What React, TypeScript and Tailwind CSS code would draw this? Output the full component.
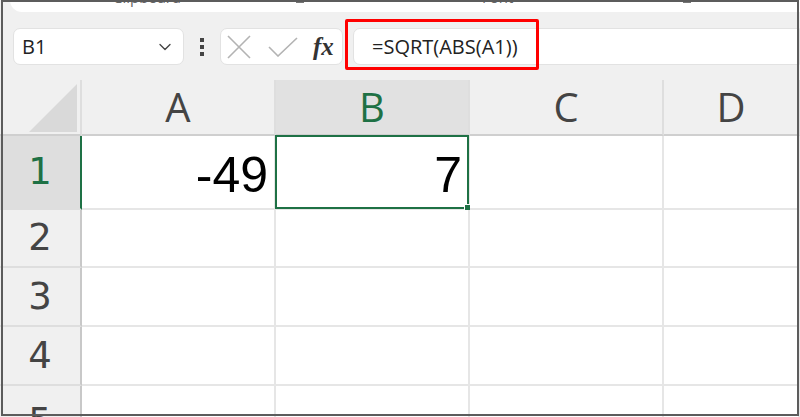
import { ChevronDown } from "lucide-react";

const cols = ["A", "B", "C", "D"];
const rowHeights = ["h-[74px]", "h-[58px]", "h-[59px]", "h-[59px]", "h-[40px]"];

const XIcon = () => (
  <svg width="24" height="24" viewBox="0 0 24 24" fill="none" stroke="#b3b3b3" strokeWidth="1.6">
    <path d="M1 1 L23 23 M23 1 L1 23" />
  </svg>
);

const CheckIcon = () => (
  <svg width="30" height="20" viewBox="0 0 30 20" fill="none" stroke="#b3b3b3" strokeWidth="1.6">
    <path d="M1 10 L10 19 L29 1" />
  </svg>
);

const Corner = () => (
  <svg width="48" height="48" viewBox="0 0 48 48">
    <path d="M48 0 L48 48 L0 48 Z" fill="#d9d9d9" />
  </svg>
);

const FormulaBar = () => (
  <div className="flex items-center mt-[16px] h-[37px]">
    <div className="ml-[13px] w-[171px] h-full bg-white rounded-[7px] border border-[#e2e2e2] flex items-center justify-between pl-[8px] pr-[8px]">
      <span className="text-[20px] text-[#222]">B1</span>
      <ChevronDown size={20} strokeWidth={1.6} color="#444" />
    </div>
    <div className="w-[36px] flex flex-col items-center gap-[3px]">
      <span className="w-[4px] h-[4px] bg-[#444]" />
      <span className="w-[4px] h-[4px] bg-[#444]" />
      <span className="w-[4px] h-[4px] bg-[#444]" />
    </div>
    <div className="w-[123px] h-full bg-white rounded-[7px] border border-[#e2e2e2] flex items-center pl-[6px]">
      <XIcon />
      <span className="ml-[17px]"><CheckIcon /></span>
      <span className="ml-[15px] font-['Liberation_Serif',serif] italic font-bold text-[25px] text-[#333] leading-none">fx</span>
    </div>
    <div className="ml-[10px] flex-1 h-full relative">
      <div className="h-full bg-white rounded-l-[7px] border border-[#e2e2e2] flex items-center pl-[18px]">
        <span className="text-[20px] text-[#222]">=SQRT(ABS(A1))</span>
      </div>
      <div className="absolute left-[-8px] top-[-9px] w-[194px] h-[51px] border-[3px] border-[#ff0000] rounded-[2px]" />
    </div>
  </div>
);

export default function App() {
  return (
    <div className="w-[800px] h-[417px] relative overflow-hidden bg-[#f0f0f0] font-['Open_Sans',sans-serif]">
      {/* tail of the ribbon */}
      <div className="ml-[10px] h-[12px] bg-white rounded-bl-[12px] overflow-hidden flex text-[15px] text-[#666] leading-none">
        <span className="ml-[103px] -translate-y-[10px]">Clipboard</span>
        <span className="ml-[115px] mt-[-1px] w-[8px] h-[4px] bg-[#777]" />
        <span className="ml-[178px] -translate-y-[10px]">Font</span>
        <span className="ml-[170px] mt-[-1px] w-[8px] h-[4px] bg-[#777]" />
      </div>

      <FormulaBar />

      {/* sheet */}
      <div className="mt-[15px] grid grid-cols-[82px_194px_194px_194px_1fr]">
        <div className="h-[56px] border-b-2 border-r-2 border-b-[#cfcfcf] border-r-[#dedede] flex items-end justify-end pr-[3px] pb-[2px]">
          <Corner />
        </div>
        {cols.map((c) => (
          <div
            key={c}
            className={`h-[56px] border-b-2 border-r-2 border-b-[#cfcfcf] border-r-[#dedede] flex items-center justify-center text-[40px] ${
              c === "B" ? "bg-[#e1e1e1] text-[#1e7145]" : "text-[#444]"
            }`}
          >
            {c}
          </div>
        ))}

        {rowHeights.map((h, i) => (
          <div key={i} className="contents">
            <div
              className={`${h} border-b-2 border-r-2 border-b-[#dedede] flex items-center justify-center font-['DejaVu_Sans',sans-serif] text-[37px] overflow-hidden ${
                i === 0
                  ? "bg-[#dedede] border-r-[#1e7145] text-[#1e7145]"
                  : "border-r-[#c8c8c8] text-[#444]"
              } ${i === 4 ? "items-start pt-[8px]" : ""}`}
            >
              {i + 1}
            </div>
            {cols.map((c) => (
              <div
                key={c}
                className={`${h} bg-white border-b-2 border-r-2 border-[#e6e6e6] relative flex items-center justify-end pr-[6px] pt-[6px] font-['Liberation_Sans',Arial,sans-serif] text-[50px] leading-none text-black`}
              >
                {i === 0 && c === "A" && "-49"}
                {i === 0 && c === "B" && (
                  <>
                    7
                    <div className="absolute left-[-1px] top-[-1px] right-[-1px] bottom-[-1px] border-2 border-[#1e7145]" />
                    <div className="absolute right-[-5px] bottom-[-5px] w-[9px] h-[9px] bg-[#1e7145] border border-white" />
                  </>
                )}
              </div>
            ))}
          </div>
        ))}
      </div>

      {/* screenshot frame */}
      <div className="absolute left-[1px] top-0 w-[798px] h-[416px] border-2 border-[#5c5c5c] pointer-events-none" />
    </div>
  );
}
